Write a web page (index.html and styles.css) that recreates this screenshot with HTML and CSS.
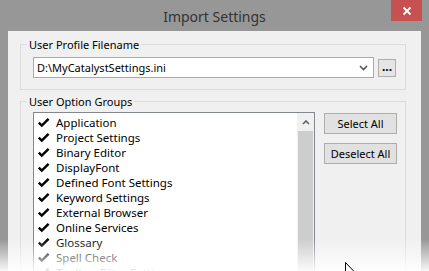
FILE: index.html
```html
<!DOCTYPE html>
<html lang="en">
<head>
  <meta charset="UTF-8">
  <meta name="viewport" content="width=device-width, initial-scale=1.0">
  <title>Import Settings</title>
  <link rel="stylesheet" href="styles.css">
</head>
<body>
  <div class="window">
    <div class="titlebar">
      <span class="title">Import Settings</span>
      <button class="close-btn" aria-label="Close">
        <svg width="10" height="10" viewBox="0 0 10 10"><path d="M1.5 1.5 L8.5 8.5 M8.5 1.5 L1.5 8.5" stroke="#fff" stroke-width="1.8"/></svg>
      </button>
    </div>

    <div class="client">
      <fieldset class="group">
        <legend>User Profile Filename</legend>
        <div class="file-row">
          <div class="combo">
            <span class="combo-text">D:\MyCatalystSettings.ini</span>
            <svg class="chevron" width="9" height="6" viewBox="0 0 9 6"><path d="M1 1 L4.5 4.5 L8 1" fill="none" stroke="#555" stroke-width="1.6"/></svg>
          </div>
          <button class="browse-btn">...</button>
        </div>
      </fieldset>

      <fieldset class="group options">
        <legend>User Option Groups</legend>
        <div class="options-row">
          <div class="listbox">
            <ul class="items">
              <li><svg class="check" viewBox="0 0 13 13"><path d="M1.8 6.6 L4.8 9.6 L11.6 2.8" fill="none" stroke="#000" stroke-width="2.5"/></svg>Application</li>
              <li><svg class="check" viewBox="0 0 13 13"><path d="M1.8 6.6 L4.8 9.6 L11.6 2.8" fill="none" stroke="#000" stroke-width="2.5"/></svg>Project Settings</li>
              <li><svg class="check" viewBox="0 0 13 13"><path d="M1.8 6.6 L4.8 9.6 L11.6 2.8" fill="none" stroke="#000" stroke-width="2.5"/></svg>Binary Editor</li>
              <li><svg class="check" viewBox="0 0 13 13"><path d="M1.8 6.6 L4.8 9.6 L11.6 2.8" fill="none" stroke="#000" stroke-width="2.5"/></svg>DisplayFont</li>
              <li><svg class="check" viewBox="0 0 13 13"><path d="M1.8 6.6 L4.8 9.6 L11.6 2.8" fill="none" stroke="#000" stroke-width="2.5"/></svg>Defined Font Settings</li>
              <li><svg class="check" viewBox="0 0 13 13"><path d="M1.8 6.6 L4.8 9.6 L11.6 2.8" fill="none" stroke="#000" stroke-width="2.5"/></svg>Keyword Settings</li>
              <li><svg class="check" viewBox="0 0 13 13"><path d="M1.8 6.6 L4.8 9.6 L11.6 2.8" fill="none" stroke="#000" stroke-width="2.5"/></svg>External Browser</li>
              <li><svg class="check" viewBox="0 0 13 13"><path d="M1.8 6.6 L4.8 9.6 L11.6 2.8" fill="none" stroke="#000" stroke-width="2.5"/></svg>Online Services</li>
              <li><svg class="check" viewBox="0 0 13 13"><path d="M1.8 6.6 L4.8 9.6 L11.6 2.8" fill="none" stroke="#000" stroke-width="2.5"/></svg>Glossary</li>
              <li><svg class="check" viewBox="0 0 13 13"><path d="M1.8 6.6 L4.8 9.6 L11.6 2.8" fill="none" stroke="#000" stroke-width="2.5"/></svg>Spell Check</li>
              <li><svg class="check" viewBox="0 0 13 13"><path d="M1.8 6.6 L4.8 9.6 L11.6 2.8" fill="none" stroke="#000" stroke-width="2.5"/></svg>Toolbar Filter Settings</li>
            </ul>
            <div class="scrollbar">
              <div class="scroll-arrow">
                <svg width="8" height="5" viewBox="0 0 8 5"><path d="M1 4 L4 1 L7 4" fill="none" stroke="#606060" stroke-width="1.6"/></svg>
              </div>
              <div class="scroll-thumb"></div>
            </div>
          </div>
          <div class="side-buttons">
            <button class="btn">Select All</button>
            <button class="btn">Deselect All</button>
          </div>
        </div>
      </fieldset>
    </div>

    <!-- fade towards the bottom of the shot -->
    <div class="fade"></div>
    <svg class="cursor" width="12" height="19" viewBox="0 0 12 19"><path d="M0.5 0.5 L0.5 15.5 L4 12 L6.5 18 L8.5 17 L6 11.3 L10.8 11.3 Z" fill="#fff" stroke="#000" stroke-width="1"/></svg>
  </div>
</body>
</html>
```

FILE: styles.css
```css
body {
  margin: 0;
  font-family: "Noto Sans", "Open Sans", sans-serif;
  background: #fff;
}

.window {
  position: relative;
  width: 429px;
  height: 271px;
  overflow: hidden;
  background: #979797;
}

.titlebar {
  height: 31px;
  display: flex;
  align-items: center;
  justify-content: center;
}

.title {
  font-size: 14px;
  color: #333;
  line-height: 20px;
  margin-top: 2px;
}

.close-btn {
  position: absolute;
  top: 0;
  right: 7px;
  width: 31px;
  height: 21px;
  border: none;
  padding: 0;
  background: #c75050;
  display: flex;
  align-items: center;
  justify-content: center;
}

.client {
  margin-left: 8px;
  width: 413px;
  height: 240px;
  box-sizing: border-box;
  padding: 6px 15px 0 12px;
  background: #f0f0f0;
  font-size: 11px;
  color: #000;
}

.group {
  margin: 0;
  padding: 0;
  min-width: 0;
  border: 1px solid #dcdcdc;
}

.group legend {
  margin-left: 6px;
  padding: 0 2px;
  line-height: 15px;
  font-size: 11px;
  color: #000;
}

.options {
  margin-top: 4px;
}

.file-row {
  display: flex;
  align-items: center;
  gap: 4px;
  padding: 5px 9px 11px 12px;
}

.combo {
  flex: 1;
  height: 21px;
  box-sizing: border-box;
  border: 1px solid #a9a9a9;
  background: #fff;
  display: flex;
  align-items: center;
  justify-content: space-between;
  padding: 0 5px 0 3px;
}

.combo-text {
  line-height: 15px;
}

.browse-btn {
  width: 18px;
  height: 18px;
  padding: 0 0 4px;
  box-sizing: border-box;
  border: 1px solid #adadad;
  background: #e5e5e5;
  font-family: "Noto Sans", sans-serif;
  font-size: 12px;
  font-weight: bold;
  line-height: 10px;
  color: #000;
  display: flex;
  align-items: flex-end;
  justify-content: center;
}

.options-row {
  display: flex;
  gap: 9px;
  padding: 3px 8px 0 12px;
}

.listbox {
  width: 282px;
  height: 200px;
  box-sizing: border-box;
  border: 1px solid #828790;
  background: #fff;
  display: flex;
}

.items {
  flex: 1;
  list-style: none;
  margin: 0;
  padding: 2px 0 0 3px;
}

.items li {
  height: 15px;
  display: flex;
  align-items: center;
  gap: 6px;
  line-height: 15px;
  font-size: 11.5px;
}

.check {
  width: 13px;
  height: 13px;
  flex: none;
}

.scrollbar {
  width: 17px;
  display: flex;
  flex-direction: column;
  background: #f0f0f0;
}

.scroll-arrow {
  height: 18px;
  display: flex;
  align-items: center;
  justify-content: center;
}

.scroll-thumb {
  flex: 1;
  margin: 0 1px;
  background: #cdcdcd;
}

.side-buttons {
  display: flex;
  flex-direction: column;
  gap: 9px;
  margin-top: 1px;
}

.btn {
  width: 73px;
  height: 21px;
  padding: 0;
  border: 1px solid #adadad;
  background: #e1e1e1;
  font-family: "Noto Sans", sans-serif;
  font-size: 11px;
  color: #000;
}

.fade {
  position: absolute;
  left: 0;
  right: 0;
  bottom: 0;
  height: 32px;
  background: linear-gradient(to bottom, rgba(255, 255, 255, 0), rgba(255, 255, 255, 0.45) 50%, rgba(255, 255, 255, 0.92));
}

.cursor {
  position: absolute;
  left: 345px;
  top: 262px;
}
```
